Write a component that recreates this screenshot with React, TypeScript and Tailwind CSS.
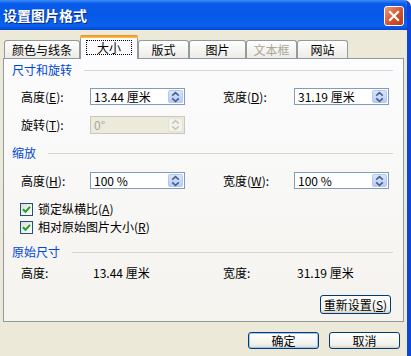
import React from 'react';

const Spin: React.FC<{ disabled?: boolean }> = ({ disabled }) => (
  <div
    className={
      disabled
        ? 'w-[15px] h-full flex items-center justify-center rounded-[2px] border border-[#E4E2D6] bg-[#F3F2EC]'
        : 'w-[15px] h-full flex items-center justify-center rounded-[2px] border border-[#B4C8F6] bg-[linear-gradient(to_bottom,#D9E5FD,#B9CCF8)]'
    }
  >
    <svg width="9" height="12" viewBox="0 0 9 12">
      <path
        d="M1.2 4.6 L4.5 1.6 L7.8 4.6 M1.2 7.4 L4.5 10.4 L7.8 7.4"
        stroke={disabled ? '#CBC8BC' : '#4D6185'}
        strokeWidth="1.7"
        fill="none"
      />
    </svg>
  </div>
);

const Field: React.FC<{ value: string; disabled?: boolean }> = ({ value, disabled }) => (
  <div
    className={
      disabled
        ? 'w-[95px] h-[18px] border border-[#C9C7BA] bg-[#EBEADB] flex items-center pl-[3px] py-px pr-px'
        : 'w-[95px] h-[17px] border border-[#7F9DB9] bg-white flex items-center pl-[3px] py-px pr-px'
    }
  >
    <span className={disabled ? 'flex-1 text-[12px] leading-none text-[#ACA899]' : 'flex-1 text-[12px] leading-none text-black'}>
      {value}
    </span>
    <Spin disabled={disabled} />
  </div>
);

const Section: React.FC<{ title: string }> = ({ title }) => (
  <div className="flex items-center h-[22px] pl-[8px] pr-[10px]">
    <span className="text-[12px] leading-none text-[#0046D5]">{title}</span>
    <div className="flex-1 h-px bg-[#D8D6CC] ml-[12px]" />
  </div>
);

const Label: React.FC<{ text: string; k?: string; w: string }> = ({ text, k, w }) => (
  <span className={`${w} text-[12px] leading-none text-black`}>
    {text}
    {k && (
      <>
        (<span className="underline">{k}</span>)
      </>
    )}
    :
  </span>
);

const Check: React.FC<{ label: string; k: string }> = ({ label, k }) => (
  <div className="flex items-center h-[16px] pl-[16px]">
    <div className="w-[13px] h-[13px] border border-[#1C5180] bg-[linear-gradient(135deg,#DCDCD7,#FFFFFF)] flex items-center justify-center">
      <svg width="9" height="9" viewBox="0 0 9 9">
        <path d="M1 4.2 L3.5 6.8 L8 1.8" stroke="#21A121" strokeWidth="2" fill="none" />
      </svg>
    </div>
    <span className="ml-[5px] text-[12px] leading-none text-black">
      {label}(<span className="underline">{k}</span>)
    </span>
  </div>
);

const Tab: React.FC<{ label: string; w: string; disabled?: boolean }> = ({ label, w, disabled }) => (
  <div
    className={`${w} h-[18px] border border-b-0 border-[#919B9C] rounded-t-[3px] bg-[linear-gradient(to_bottom,#FFFFFF,#ECEBE6)] flex items-center justify-center`}
  >
    <span className={disabled ? 'text-[12px] leading-none text-[#ACA899]' : 'text-[12px] leading-none text-black'}>
      {label}
    </span>
  </div>
);

const XPButton: React.FC<{ children: React.ReactNode; def?: boolean; w: string; h: string }> = ({
  children,
  def,
  w,
  h,
}) => (
  <div
    className={`${w} ${h} border border-[#003C74] rounded-[3px] bg-[linear-gradient(to_bottom,#FFFFFF,#F0F0EA_80%,#D6D0C5)] flex items-center justify-center ${
      def ? 'shadow-[inset_0_0_0_1px_#A8C4F0]' : ''
    }`}
  >
    <span className="text-[12px] leading-none text-black">{children}</span>
  </div>
);

export default function App() {
  return (
    <div className="w-[411px] h-[356px] overflow-hidden bg-[#ECE9D8] border-r-[4px] border-[#0B47D6] rounded-tr-[7px] flex flex-col font-['Noto_Sans_CJK_SC',sans-serif]">
      {/* title bar */}
      <div className="h-[30px] shrink-0 flex items-center justify-between pl-[3px] pr-[3px] bg-[linear-gradient(to_bottom,#3D8CF8_0%,#0A5CEA_12%,#0558E6_50%,#0A62EE_85%,#0447D2_100%)]">
        <span className="text-[14px] font-bold leading-none text-white [text-shadow:1px_1px_0_#0A2A8A]">
          设置图片格式
        </span>
        <div className="w-[20px] h-[20px] mt-[1px] rounded-[3px] border border-white bg-[linear-gradient(135deg,#EE9A7C,#D2522C_55%,#B83A17)] flex items-center justify-center">
          <svg width="12" height="12" viewBox="0 0 12 12">
            <path d="M2 2 L10 10 M10 2 L2 10" stroke="white" strokeWidth="2.2" strokeLinecap="square" />
          </svg>
        </div>
      </div>

      <div className="flex-1 flex flex-col px-[3px]">
        {/* tabs */}
        <div className="flex items-end h-[28px] ml-[1px]">
          <Tab label="颜色与线条" w="w-[76px]" />
          <div className="w-[58px] h-[24px] -mb-px z-10 relative border-x border-[#919B9C] rounded-t-[3px] bg-[#FCFCFE] flex flex-col">
            <div className="h-[3px] rounded-t-[2px] bg-[linear-gradient(to_bottom,#E68B2C,#FFC73C)] -mx-px" />
            <div className="flex-1 flex items-center justify-center pb-[2px]">
              <span className="border border-dotted border-black px-[10px] h-[15px] flex items-center text-[12px] leading-none text-black">
                大小
              </span>
            </div>
          </div>
          <Tab label="版式" w="w-[51px]" />
          <Tab label="图片" w="w-[57px]" />
          <Tab label="文本框" w="w-[51px]" disabled />
          <Tab label="网站" w="w-[51px]" />
        </div>

        {/* panel */}
        <div className="border border-[#919B9C] bg-[linear-gradient(to_bottom,#FCFCFE,#F4F3EE)] flex flex-col pb-[7px]">
          <Section title="尺寸和旋转" />
          <div className="flex items-center mt-[7px] pl-[17px]">
            <Label text="高度" k="E" w="w-[69px]" />
            <Field value="13.44 厘米" />
            <span className="w-[38px]" />
            <Label text="宽度" k="D" w="w-[71px]" />
            <Field value="31.19 厘米" />
          </div>
          <div className="flex items-center mt-[11px] pl-[17px]">
            <Label text="旋转" k="T" w="w-[69px]" />
            <Field value="0°" disabled />
          </div>

          <div className="mt-[8px]">
            <Section title="缩放" />
          </div>
          <div className="flex items-center mt-[8px] pl-[17px]">
            <Label text="高度" k="H" w="w-[69px]" />
            <Field value="100 %" />
            <span className="w-[38px]" />
            <Label text="宽度" k="W" w="w-[71px]" />
            <Field value="100 %" />
          </div>
          <div className="mt-[12px]">
            <Check label="锁定纵横比" k="A" />
          </div>
          <div className="mt-[2px]">
            <Check label="相对原始图片大小" k="R" />
          </div>

          <div className="mt-[6px]">
            <Section title="原始尺寸" />
          </div>
          <div className="flex items-center h-[16px] mt-[2px] pl-[17px]">
            <Label text="高度" w="w-[69px]" />
            <span className="w-[95px] pl-[3px] text-[12px] leading-none text-black">13.44 厘米</span>
            <span className="w-[38px]" />
            <Label text="宽度" w="w-[71px]" />
            <span className="w-[95px] pl-[3px] text-[12px] leading-none text-black">31.19 厘米</span>
          </div>
          <div className="flex justify-end mt-[14px] pr-[12px]">
            <XPButton w="w-[71px]" h="h-[19px]">
              重新设置(<span className="underline">S</span>)
            </XPButton>
          </div>
        </div>

        {/* dialog buttons */}
        <div className="flex justify-end gap-[10px] mt-[10px] pr-[4px]">
          <XPButton w="w-[71px]" h="h-[17px]" def>
            确定
          </XPButton>
          <XPButton w="w-[71px]" h="h-[17px]">
            取消
          </XPButton>
        </div>
      </div>
    </div>
  );
}
